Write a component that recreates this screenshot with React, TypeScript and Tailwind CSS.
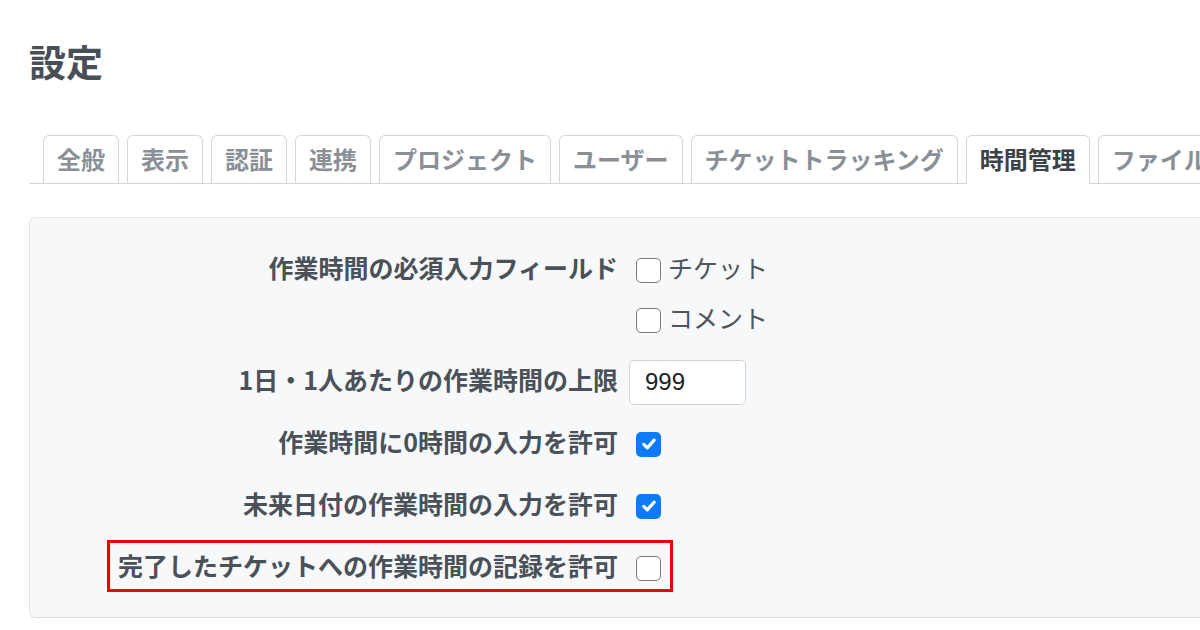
import React from "react";

const FONT = { fontFamily: '"Noto Sans CJK JP", "Noto Sans", sans-serif' };

function Box({ checked }: { checked: boolean }) {
  if (checked) {
    return (
      <span className="flex h-[25px] w-[25px] shrink-0 items-center justify-center rounded-[5px] bg-[#0d7bf5]">
        <svg width="18" height="18" viewBox="0 0 16 16" fill="none">
          <path d="M3.4 8.4 L6.5 11.4 L12.6 4.6" stroke="#ffffff" strokeWidth="2.8" strokeLinecap="round" strokeLinejoin="round" />
        </svg>
      </span>
    );
  }
  return <span className="block h-[25px] w-[25px] shrink-0 rounded-[5px] border-[1.5px] border-[#7a7a7a] bg-white" />;
}

const tabs = ["全般", "表示", "認証", "連携", "プロジェクト", "ユーザー", "チケットトラッキング", "時間管理", "ファイル"];

function Label({ children }: { children: React.ReactNode }) {
  return (
    <div className="w-[588px] shrink-0 pb-[5px] text-right text-[25px] font-bold leading-none text-[#4a5158]">{children}</div>
  );
}

export default function App() {
  return (
    <div className="h-[630px] w-[1200px] overflow-hidden bg-white" style={FONT}>
      <div className="pl-[29px] pt-[43px]">
        <h1 className="text-[37px] font-bold leading-none text-[#484f56]">設定</h1>
        <div className="mt-[55px] flex w-[1300px] gap-[8px] whitespace-nowrap border-b border-[#d2d7dc] pl-[14px]">
          {tabs.map((t) => {
            const sel = t === "時間管理";
            return (
              <div
                key={t}
                className={
                  sel
                    ? "-mb-px flex h-[49px] items-center rounded-t-[6px] border border-b-0 border-[#d2d7dc] bg-white px-[13px] pb-[2px] text-[24px] font-bold text-[#3d4248]"
                    : "flex h-[48px] items-center rounded-t-[6px] border border-b-0 border-[#d2d7dc] bg-white px-[13px] pb-[2px] text-[24px] font-bold text-[#8a9096]"
                }
              >
                {t}
              </div>
            );
          })}
        </div>
        <div className="mt-[33px] w-[1300px] rounded-[6px] border border-[#e3e6e9] border-b-[#dadee2] bg-[#f7f8fa] pb-[24px] pt-[27px]">
          <div className="flex flex-col gap-[12px]">
            <div className="flex">
              <div className="flex h-[50px] items-center">
                <Label>作業時間の必須入力フィールド</Label>
              </div>
              <div className="ml-[18px] flex flex-col">
                <div className="flex h-[50px] items-center gap-[7px]">
                  <Box checked={false} />
                  <span className="pb-[5px] text-[25px] leading-none text-[#4f555b]">チケット</span>
                </div>
                <div className="flex h-[50px] items-center gap-[7px]">
                  <Box checked={false} />
                  <span className="pb-[5px] text-[25px] leading-none text-[#4f555b]">コメント</span>
                </div>
              </div>
            </div>
            <div className="flex h-[50px] items-center">
              <Label>1日・1人あたりの作業時間の上限</Label>
              <div
                className="ml-[11px] flex h-[45px] w-[117px] items-center rounded-[5px] border border-[#cfd4d9] bg-white pl-[15px] text-[24px] text-[#222]"
                style={{ fontFamily: '"Liberation Sans", Arial, sans-serif' }}
              >
                999
              </div>
            </div>
            <div className="flex h-[50px] items-center">
              <Label>作業時間に0時間の入力を許可</Label>
              <div className="ml-[18px]">
                <Box checked={true} />
              </div>
            </div>
            <div className="flex h-[50px] items-center">
              <Label>未来日付の作業時間の入力を許可</Label>
              <div className="ml-[18px]">
                <Box checked={true} />
              </div>
            </div>
            <div className="relative flex h-[50px] items-center">
              <Label>完了したチケットへの作業時間の記録を許可</Label>
              <div className="ml-[18px]">
                <Box checked={false} />
              </div>
              <div className="pointer-events-none absolute left-[77px] top-[-3px] h-[52px] w-[566px] border-[3px] border-[#f00000]" />
            </div>
          </div>
        </div>
      </div>
    </div>
  );
}
